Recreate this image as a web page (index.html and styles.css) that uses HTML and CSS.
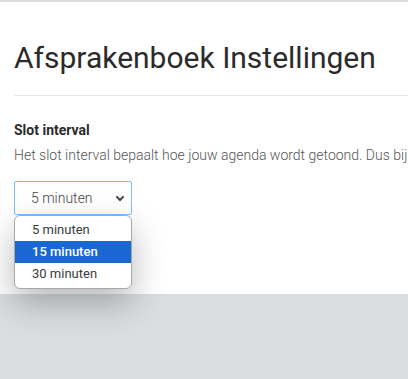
FILE: index.html
```html
<!DOCTYPE html>
<html lang="nl">
<head>
<meta charset="utf-8">
<title>Afsprakenboek Instellingen</title>
<link rel="stylesheet" href="styles.css">
</head>
<body>
<div class="topbar"></div>
<main class="page">
  <h1 class="title">Afsprakenboek Instellingen</h1>
  <hr class="divider">
  <div class="field">
    <div class="label">Slot interval</div>
    <p class="help">Het slot interval bepaalt hoe jouw agenda wordt getoond. Dus bij een slot interval van 15 minuten</p>
    <div class="select-wrap">
      <div class="select">
        <span class="select-value">5 minuten</span>
        <svg class="chevron" width="10" height="7" viewBox="0 0 10 7" aria-hidden="true"><path d="M1.4 1.4 L5 5 L8.6 1.4" fill="none" stroke="#444" stroke-width="2"/></svg>
      </div>
      <ul class="options">
        <li class="option">5 minuten</li>
        <li class="option selected">15 minuten</li>
        <li class="option">30 minuten</li>
      </ul>
    </div>
  </div>
</main>
<div class="backdrop"></div>
</body>
</html>
```

FILE: styles.css
```css
html, body {
  margin: 0;
  padding: 0;
  background: #ffffff;
}
body {
  font-family: Roboto, "Liberation Sans", sans-serif;
  color: #333333;
  overflow: hidden;
  height: 379px;
}
.topbar {
  height: 2px;
  background: #dcdcdc;
}
.page {
  height: 254px;
  padding: 38px 0 0 14px;
  background: #ffffff;
  position: relative;
}
.title {
  margin: 0;
  font-size: 30px;
  line-height: 36px;
  font-weight: 400;
  color: #2b2b2b;
  white-space: nowrap;
}
.divider {
  margin: 19px 0 0;
  border: 0;
  border-top: 1px solid #e7e7e7;
  height: 0;
}
.field {
  padding-top: 24px;
}
.label {
  font-size: 14px;
  line-height: 20px;
  font-weight: 700;
  color: #2b2b2b;
}
.help {
  margin: 5px 0 0;
  font-size: 14px;
  line-height: 20px;
  font-weight: 300;
  color: #555555;
  white-space: nowrap;
  overflow: hidden;
}
.select-wrap {
  position: relative;
  margin-top: 16px;
  width: 118px;
}
.select {
  box-sizing: border-box;
  width: 118px;
  height: 34px;
  border: 1px solid #80bdff;
  border-radius: 2px;
  display: flex;
  align-items: center;
  justify-content: space-between;
  padding: 0 6px 0 16px;
  font-size: 14px;
  font-weight: 300;
  color: #444;
}
.chevron {
  display: block;
}
.options {
  position: absolute;
  z-index: 10;
  top: 34px;
  left: 0;
  box-sizing: border-box;
  width: 118px;
  margin: 0;
  padding: 3px 0;
  list-style: none;
  background: #ffffff;
  border: 1px solid #a8a8a8;
  border-radius: 6px;
  box-shadow: 0 14px 34px rgba(0, 0, 0, 0.28);
}
.option {
  height: 22px;
  line-height: 22px;
  padding-left: 17px;
  font-size: 13px;
  color: #3a3a3a;
}
.option.selected {
  background: #1a67d2;
  color: #ffffff;
  font-weight: 500;
}
.backdrop {
  height: 85px;
  background: #dcdddf;
}
```
